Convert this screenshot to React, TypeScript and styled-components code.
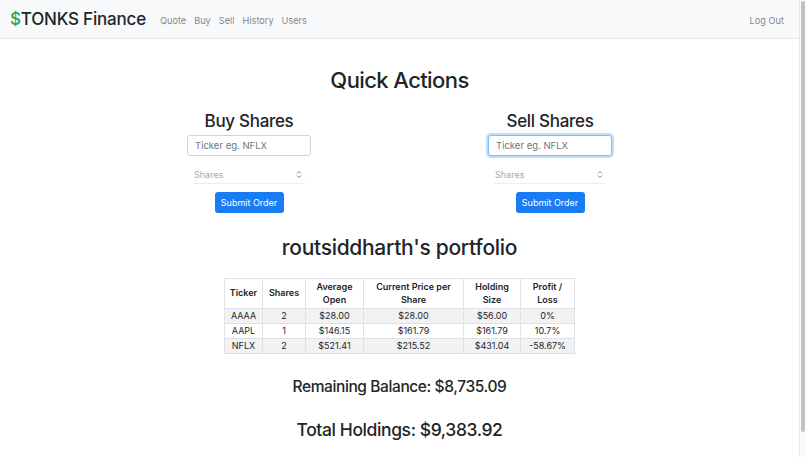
import React from 'react';
import styled, { createGlobalStyle } from 'styled-components';

const GlobalStyle = createGlobalStyle`
  html, body {
    margin: 0;
    padding: 0;
    background: #fff;
    overflow: hidden;
  }
  body {
    font-family: Inter, "Liberation Sans", Arial, sans-serif;
    color: #212529;
  }
  * { box-sizing: border-box; }
`;

const Frame = styled.div`
  display: flex;
  width: 806px;
  height: 457px;
`;

const Page = styled.div`
  flex: 1;
  min-width: 0;
  display: flex;
  flex-direction: column;
`;

const ScrollTrack = styled.div`
  width: 7px;
  border-left: 1px solid #e8e8e8;
  background: #fafafa;
  padding: 1px 1px 0 1px;
`;

const ScrollThumb = styled.div`
  height: 431px;
  border-radius: 3px;
  background: #c2c2c2;
`;

const Navbar = styled.nav`
  height: 39px;
  display: flex;
  align-items: center;
  padding: 0 15px 0 10px;
  background: #f8f9fa;
  border-bottom: 1px solid #e5e7ea;
`;

const Brand = styled.span`
  font-size: 17px;
  font-weight: 500;
  color: #212529;
  margin-right: 14px;
  letter-spacing: -0.2px;
`;

const Dollar = styled.span`
  color: #28a745;
`;

const NavLinks = styled.div`
  display: flex;
  gap: 8px;
  flex: 1;
  padding-top: 3px;
`;

const NavLink = styled.a<{ $offset?: boolean }>`
  font-size: 9.2px;
  color: rgba(0, 0, 0, 0.5);
  text-decoration: none;
  padding-top: ${({ $offset }) => ($offset ? '3px' : '0')};
`;

const Main = styled.main`
  display: flex;
  flex-direction: column;
  align-items: center;
`;

const PageTitle = styled.h1`
  margin: 27px 0 16px;
  font-size: 22px;
  font-weight: 500;
  line-height: 28px;
  letter-spacing: -0.6px;
`;

const ActionsRow = styled.div`
  display: grid;
  grid-template-columns: 301px 301px;
`;

const ActionCol = styled.div`
  display: flex;
  flex-direction: column;
  align-items: center;
`;

const ActionTitle = styled.h2`
  margin: 0 0 3px;
  font-size: 17px;
  font-weight: 500;
  line-height: 22px;
  letter-spacing: -0.3px;
`;

const TextInput = styled.input<{ $focused?: boolean }>`
  width: 124px;
  height: 21px;
  padding: 0 7px;
  font-family: inherit;
  font-size: 9.5px;
  color: #495057;
  border-radius: 3px;
  outline: none;
  border: 1px solid ${({ $focused }) => ($focused ? '#80bdff' : '#ced4da')};
  box-shadow: ${({ $focused }) => ($focused ? '0 0 0 2px rgba(0, 123, 255, 0.25)' : 'none')};
  &::placeholder { color: #6c757d; }
`;

const NumberField = styled.div`
  width: 112px;
  height: 18px;
  margin-top: 10px;
  display: flex;
  align-items: center;
  justify-content: space-between;
  padding: 0 3px 0 1px;
  border-bottom: 1px solid #eceef0;
  font-size: 9px;
  color: #a3a8ad;
`;

const SubmitButton = styled.button`
  margin-top: 8px;
  width: 69px;
  height: 21px;
  border: none;
  border-radius: 3px;
  background: #1a7cf5;
  color: #fff;
  font-family: inherit;
  font-size: 9px;
  padding: 0;
`;

const PortfolioTitle = styled.h2`
  margin: 22px 0 17px;
  font-size: 21px;
  font-weight: 500;
  line-height: 26px;
  letter-spacing: -0.3px;
`;

const Table = styled.table`
  border-collapse: collapse;
  font-size: 9px;
  color: #212529;
`;

const Th = styled.th<{ $w: number }>`
  width: ${({ $w }) => $w}px;
  border: 1px solid #dee2e6;
  font-weight: 600;
  padding: 2px 4px;
  line-height: 12.5px;
  text-align: center;
`;

const Row = styled.tr<{ $striped?: boolean }>`
  background: ${({ $striped }) => ($striped ? '#f2f2f2' : '#fff')};
`;

const Td = styled.td`
  border: 1px solid #dee2e6;
  height: 15px;
  padding: 0 4px;
  text-align: center;
  line-height: 12px;
`;

const Summary = styled.h3<{ $size: number; $mt: number }>`
  margin: ${({ $mt }) => $mt}px 0 0;
  font-size: ${({ $size }) => $size}px;
  font-weight: 500;
  line-height: 22px;
  letter-spacing: -0.4px;
`;

const Spinner = () => (
  <svg width="6" height="9" viewBox="0 0 6 9">
    <path d="M1 3.5 L3 1.5 L5 3.5" fill="none" stroke="#6c757d" strokeWidth="0.9" />
    <path d="M1 5.5 L3 7.5 L5 5.5" fill="none" stroke="#6c757d" strokeWidth="0.9" />
  </svg>
);

const holdings = [
  { ticker: 'AAAA', shares: 2, open: '$28.00', price: '$28.00', size: '$56.00', pl: '0%' },
  { ticker: 'AAPL', shares: 1, open: '$146.15', price: '$161.79', size: '$161.79', pl: '10.7%' },
  { ticker: 'NFLX', shares: 2, open: '$521.41', price: '$215.52', size: '$431.04', pl: '-58.67%' },
];

const TradeForm = ({ title, focused }: { title: string; focused?: boolean }) => (
  <ActionCol>
    <ActionTitle>{title}</ActionTitle>
    <TextInput placeholder="Ticker eg. NFLX" $focused={focused} readOnly />
    <NumberField>
      <span>Shares</span>
      <Spinner />
    </NumberField>
    <SubmitButton>Submit Order</SubmitButton>
  </ActionCol>
);

export default function App() {
  return (
    <>
      <GlobalStyle />
      <Frame>
        <Page>
          <Navbar>
            <Brand>
              <Dollar>$</Dollar>TONKS Finance
            </Brand>
            <NavLinks>
              <NavLink>Quote</NavLink>
              <NavLink>Buy</NavLink>
              <NavLink>Sell</NavLink>
              <NavLink>History</NavLink>
              <NavLink>Users</NavLink>
            </NavLinks>
            <NavLink $offset>Log Out</NavLink>
          </Navbar>
          <Main>
            <PageTitle>Quick Actions</PageTitle>
            <ActionsRow>
              <TradeForm title="Buy Shares" />
              <TradeForm title="Sell Shares" focused />
            </ActionsRow>
            <PortfolioTitle>routsiddharth's portfolio</PortfolioTitle>
            <Table>
              <thead>
                <tr>
                  <Th $w={38}>Ticker</Th>
                  <Th $w={43}>Shares</Th>
                  <Th $w={58}>Average Open</Th>
                  <Th $w={100}>Current Price per Share</Th>
                  <Th $w={57}>Holding Size</Th>
                  <Th $w={54}>Profit / Loss</Th>
                </tr>
              </thead>
              <tbody>
                {holdings.map((h, i) => (
                  <Row key={h.ticker} $striped={i % 2 === 0}>
                    <Td>{h.ticker}</Td>
                    <Td>{h.shares}</Td>
                    <Td>{h.open}</Td>
                    <Td>{h.price}</Td>
                    <Td>{h.size}</Td>
                    <Td>{h.pl}</Td>
                  </Row>
                ))}
              </tbody>
            </Table>
            <Summary $size={15.5} $mt={22}>Remaining Balance: $8,735.09</Summary>
            <Summary $size={17.5} $mt={21}>Total Holdings: $9,383.92</Summary>
          </Main>
        </Page>
        <ScrollTrack>
          <ScrollThumb />
        </ScrollTrack>
      </Frame>
    </>
  );
}
